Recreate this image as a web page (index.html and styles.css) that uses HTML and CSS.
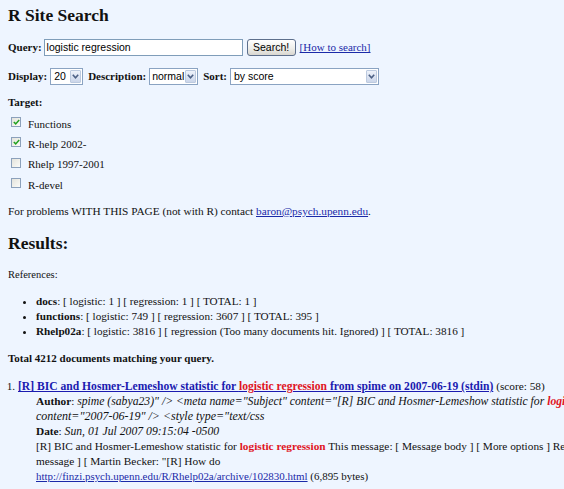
FILE: index.html
```html
<!DOCTYPE html>
<html>
<head>
<meta charset="utf-8">
<title>R Site Search</title>
<link rel="stylesheet" href="styles.css">
</head>
<body>
<div class="page">
  <h1 class="title">R Site Search</h1>

  <form class="search-form">
    <div class="row row-query">
      <label class="lbl">Query:</label>
      <span class="textbox">logistic regression</span>
      <span class="button">Search!</span>
      <a class="link" href="#">[How to search]</a>
    </div>

    <div class="row row-options">
      <label class="lbl">Display:</label>
      <span class="select sel-display"><span class="sel-val">20</span><span class="sel-arrow"><svg width="7" height="5" viewBox="0 0 7 5"><path d="M0.8 0.8 L3.5 3.8 L6.2 0.8" fill="none" stroke="#4d6185" stroke-width="1.6"/></svg></span></span>
      <label class="lbl">Description:</label>
      <span class="select sel-desc"><span class="sel-val">normal</span><span class="sel-arrow"><svg width="7" height="5" viewBox="0 0 7 5"><path d="M0.8 0.8 L3.5 3.8 L6.2 0.8" fill="none" stroke="#4d6185" stroke-width="1.6"/></svg></span></span>
      <label class="lbl">Sort:</label>
      <span class="select sel-sort"><span class="sel-val">by score</span><span class="sel-arrow"><svg width="7" height="5" viewBox="0 0 7 5"><path d="M0.8 0.8 L3.5 3.8 L6.2 0.8" fill="none" stroke="#4d6185" stroke-width="1.6"/></svg></span></span>
    </div>

    <div class="target-head">Target:</div>
    <div class="targets">
      <div class="target"><span class="cb checked"><svg width="7" height="6" viewBox="0 0 7 6"><path d="M0.8 3 L2.7 4.9 L6.2 1" fill="none" stroke="#21a121" stroke-width="1.5"/></svg></span><span class="target-text">Functions</span></div>
      <div class="target"><span class="cb checked"><svg width="7" height="6" viewBox="0 0 7 6"><path d="M0.8 3 L2.7 4.9 L6.2 1" fill="none" stroke="#21a121" stroke-width="1.5"/></svg></span><span class="target-text">R-help 2002-</span></div>
      <div class="target"><span class="cb"></span><span class="target-text">Rhelp 1997-2001</span></div>
      <div class="target"><span class="cb"></span><span class="target-text">R-devel</span></div>
    </div>
  </form>

  <p class="contact">For problems WITH THIS PAGE (not with R) contact <a class="link" href="#">baron@psych.upenn.edu</a>.</p>

  <h2 class="title results-title">Results:</h2>

  <p class="refs-head">References:</p>
  <ul class="refs">
    <li><b>docs</b>: [ logistic: 1 ] [ regression: 1 ] [ TOTAL: 1 ]</li>
    <li><b>functions</b>: [ logistic: 749 ] [ regression: 3607 ] [ TOTAL: 395 ]</li>
    <li><b>Rhelp02a</b>: [ logistic: 3816 ] [ regression (Too many documents hit. Ignored) ] [ TOTAL: 3816 ]</li>
  </ul>

  <p class="total">Total 4212 documents matching your query.</p>

  <ol class="hits">
    <li class="hit">
      <a class="hit-link" href="#">[R] BIC and Hosmer-Lemeshow statistic for <span class="hl">logistic regression</span> from spime on 2007-06-19 (stdin)</a> (score: 58)
      <div class="hit-body">
        <div><b>Author</b>: <i class="author-val">spime (sabya23)" /&gt; &lt;meta name="Subject" content="[R] BIC and Hosmer-Lemeshow statistic for <span class="hl">logistic regression</span>" /&gt; &lt;meta name="Date"</i></div>
        <div><i class="content-val">content="2007-06-19" /&gt; &lt;style type="text/css</i></div>
        <div><b>Date</b>: <i class="date-val">Sun, 01 Jul 2007 09:15:04 -0500</i></div>
        <div>[R] BIC and Hosmer-Lemeshow statistic for <span class="hl">logistic regression</span> This message: [ Message body ] [ More options ] Related</div>
        <div>message ] [ Martin Becker: "[R] How do</div>
        <div class="url-line"><a class="url" href="#">http://finzi.psych.upenn.edu/R/Rhelp02a/archive/102830.html</a> (6,895 bytes)</div>
      </div>
    </li>
  </ol>
</div>
</body>
</html>
```

FILE: styles.css
```css
html, body {
  margin: 0;
  padding: 0;
  background: #eef5ff;
  overflow: hidden;
}

.page {
  padding: 0 8px;
  font-family: "Liberation Serif", "Times New Roman", serif;
  font-size: 11px;
  color: #111;
  width: 720px;
}

.title {
  font-size: 17.5px;
  font-weight: bold;
  line-height: 22px;
  margin: 4px 0 0 0;
  color: #111;
}

.search-form {
  margin: 0;
}

.row {
  display: flex;
  align-items: center;
  height: 20px;
}

.row-query {
  margin-top: 11px;
}

.row-options {
  margin-top: 9px;
}

.lbl {
  font-weight: bold;
  margin-right: 2px;
}

.row-options .lbl {
  margin-right: 3px;
}

.textbox {
  box-sizing: border-box;
  width: 199px;
  height: 17px;
  border: 1px solid #7f9db9;
  background: #fff;
  font-family: "Liberation Sans", Arial, sans-serif;
  font-size: 10.5px;
  line-height: 15px;
  padding: 0 2px;
  color: #000;
}

.button {
  box-sizing: border-box;
  margin-left: 4px;
  width: 49px;
  height: 17px;
  border: 1px solid #5d6f8c;
  border-radius: 3px;
  background: linear-gradient(#ffffff, #eeeeea 55%, #d9d7d0);
  font-family: "Liberation Sans", Arial, sans-serif;
  font-size: 10.5px;
  line-height: 15px;
  text-align: center;
  color: #000;
}

.link {
  color: #1b2aa8;
  text-decoration: underline;
}

.row-query .link {
  margin-left: 4px;
}

.select {
  box-sizing: border-box;
  display: flex;
  align-items: stretch;
  height: 17px;
  border: 1px solid #8aa3c2;
  background: #fff;
  padding: 1px;
  margin-right: 5px;
  font-family: "Liberation Sans", Arial, sans-serif;
  font-size: 10.5px;
  color: #000;
}

.sel-val {
  flex: 1 0 auto;
  line-height: 13px;
  padding-left: 2px;
  white-space: nowrap;
}

.sel-arrow {
  box-sizing: border-box;
  flex: 0 0 11px;
  width: 11px;
  border: 1px solid #bccadf;
  border-radius: 1px;
  background: linear-gradient(#eef2fa, #cbd6ea);
  display: flex;
  align-items: center;
  justify-content: center;
}

.sel-display {
  width: 33px;
}

.sel-desc {
  width: 49px;
}

.sel-desc .sel-val {
  padding-left: 1px;
  flex: 0 0 33px;
}

.sel-sort {
  width: 149px;
}

.target-head {
  font-weight: bold;
  margin-top: 9px;
  line-height: 15px;
}

.targets {
  margin-top: 2px;
}

.target {
  display: flex;
  align-items: center;
  height: 20.3px;
}

.cb {
  box-sizing: border-box;
  width: 10px;
  height: 10px;
  margin: 0 7px 0 3px;
  border: 1px solid #8ca1bb;
  background: linear-gradient(135deg, #e3e3dc, #fbfbf8);
  display: flex;
  align-items: center;
  justify-content: center;
}

.target-text {
  padding-top: 3px;
}

.contact {
  margin: 11px 0 0 0;
  line-height: 15px;
  font-size: 11.3px;
}

.results-title {
  margin-top: 13px;
}

.refs-head {
  margin: 13px 0 0 0;
  line-height: 15px;
  font-size: 10.5px;
}

.refs {
  margin: 12px 0 0 0;
  padding-left: 28px;
  line-height: 15px;
  font-size: 11.2px;
  list-style: disc;
}

.total {
  margin: 12px 0 0 0;
  font-weight: bold;
  line-height: 15px;
}

.hits {
  margin: 13px 0 0 0;
  padding-left: 10px;
  line-height: 15px;
  font-size: 11.3px;
}

.hit-link {
  color: #1b1bb0;
  font-weight: bold;
  text-decoration: underline;
  font-size: 11.6px;
}

.hl {
  color: #e0141e;
  font-weight: bold;
}

.hit-body {
  margin-left: 18px;
  white-space: nowrap;
}

.author-val {
  font-size: 11.7px;
}

.content-val {
  font-size: 12px;
}

.date-val {
  font-size: 11.7px;
}

.url-line {
  font-size: 10.95px;
}

.url {
  color: #1b2aa8;
  text-decoration: underline;
}
```
